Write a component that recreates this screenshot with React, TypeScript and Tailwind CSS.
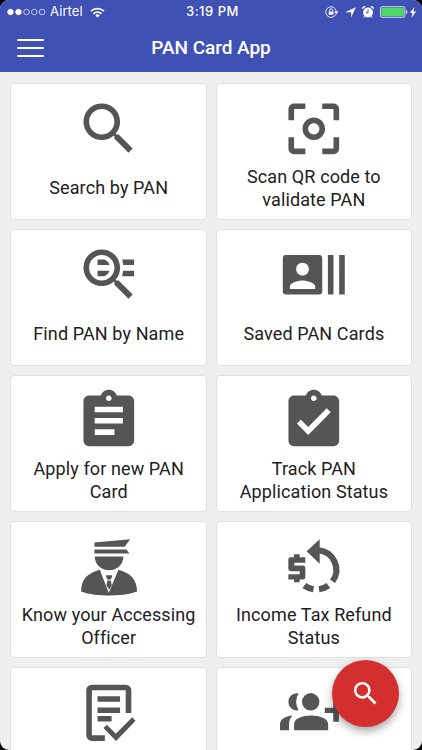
import type { ReactNode } from "react";

const SEARCH =
  "M15.5 14h-.79l-.28-.27A6.471 6.471 0 0 0 16 9.5 6.5 6.5 0 1 0 9.5 16c1.61 0 3.09-.59 4.23-1.57l.27.28v.79l5 4.99L20.49 19l-4.99-5zm-6 0C7.01 14 5 11.99 5 9.5S7.01 5 9.5 5 14 7.01 14 9.5 11.99 14 9.5 14z";
const CLIPBOARD =
  "M19 3h-4.18C14.4 1.84 13.3 1 12 1c-1.3 0-2.4.84-2.82 2H5c-1.1 0-2 .9-2 2v14c0 1.1.9 2 2 2h14c1.1 0 2-.9 2-2V5c0-1.1-.9-2-2-2zm-7 0c.55 0 1 .45 1 1s-.45 1-1 1-1-.45-1-1 .45-1 1-1z";

function Glyph({ children, viewBox = "0 0 24 24" }: { children: ReactNode; viewBox?: string }) {
  return (
    <svg viewBox={viewBox} className="block size-[67.6px] shrink-0 fill-[#555555]">
      {children}
    </svg>
  );
}

type Tile = { lines: string[]; icon: ReactNode };

const tiles: Tile[] = [
  { lines: ["Search by PAN"], icon: <Glyph><path d={SEARCH} /></Glyph> },
  {
    lines: ["Scan QR code to", "validate PAN"],
    icon: (
      <Glyph>
        <path d="M5 15H3v4c0 1.1.9 2 2 2h4v-2H5v-4zM5 5h4V3H5c-1.1 0-2 .9-2 2v4h2V5zm14-2h-4v2h4v4h2V5c0-1.1-.9-2-2-2zm0 16h-4v2h4c1.1 0 2-.9 2-2v-4h-2v4zM12 8c-2.21 0-4 1.79-4 4s1.79 4 4 4 4-1.79 4-4-1.79-4-4-4zm0 6c-1.1 0-2-.9-2-2s.9-2 2-2 2 .9 2 2-.9 2-2 2z" />
      </Glyph>
    ),
  },
  {
    lines: ["Find PAN by Name"],
    icon: (
      <Glyph>
        <path d={SEARCH} />
        <path d="M8 6.6h2.5q1.3.6 1.8 1.9H8zM8 10.6h4.3q-.5 1.3-1.8 1.9H8zM16.8 6.6H21v1.9h-3.9zM17.1 10.6H21v1.9h-4.3z" />
      </Glyph>
    ),
  },
  {
    lines: ["Saved PAN Cards"],
    icon: (
      <Glyph>
        <path d="M21 5v14h2V5h-2zm-4 14h2V5h-2v14zM14 5H2c-.55 0-1 .45-1 1v12c0 .55.45 1 1 1h12c.55 0 1-.45 1-1V6c0-.55-.45-1-1-1zM8 7.75c1.24 0 2.25 1.01 2.25 2.25S9.24 12.25 8 12.25 5.75 11.24 5.75 10 6.76 7.75 8 7.75zM12.5 17h-9v-.75c0-1.5 3-2.25 4.5-2.25s4.5.75 4.5 2.25V17z" />
      </Glyph>
    ),
  },
  {
    lines: ["Apply for new PAN", "Card"],
    icon: <Glyph><path d={CLIPBOARD + "m2 14H7v-2h7v2zm3-4H7v-2h10v2zm0-4H7V7h10v2z"} /></Glyph>,
  },
  {
    lines: ["Track PAN", "Application Status"],
    icon: <Glyph><path d={CLIPBOARD + "m-2 14l-4-4 1.41-1.41L10 14.17l6.59-6.59L18 9l-8 8z"} /></Glyph>,
  },
  {
    lines: ["Know your Accessing", "Officer"],
    icon: (
      <Glyph viewBox="223.7 43.5 202.8 202.8">
        <path d="M282 72L389 62L373 85H282zM282 93H378L387 105H282z" />
        <path d="M283 114H369C368 139 350 155 326 155S284 139 283 114z" />
        <path d="M242 219C243 183 258 166 298 154L325 223L354 154C392 165 409 183 410 219C385 228 355 231 326 231S265 228 242 219z" />
        <path d="M317 170H335V175L331 183H321L317 175zM321 186H331L334 200L326 214L318 200z" />
      </Glyph>
    ),
  },
  {
    lines: ["Income Tax Refund", "Status"],
    icon: (
      <Glyph viewBox="207 43.5 202.8 202.8">
        <path d="M287 98L326 62V136z" />
        <path
          d="M322 95.3A58.5 58.5 0 0 1 364.5 188.3M352 201A60 60 0 0 1 324 212.4M307.6 212.4A60 60 0 0 1 280 201"
          fill="none"
          stroke="#555555"
          strokeWidth="18.5"
        />
        <path d="M249 107h17v9h17v17h-33v8h26q7 0 7 7v28q0 7-7 7h-10v8h-17v-8h-17v-16h34v-9h-27q-7 0-7-7v-28q0-7 7-7h10z" />
      </Glyph>
    ),
  },
  {
    lines: [],
    icon: (
      <Glyph>
        <path d="M6 2h12a2 2 0 0 1 2 2v8.1h-2V4H6v16h4.6v2H6a2 2 0 0 1-2-2V4a2 2 0 0 1 2-2z" />
        <path d="M8 6.1h8v2H8zM8 10.1h8v2H8zM8 13.1h5v2H8zM10.1 17.4l1.2-1.2 3.2 3.2 5.8-5.8 1.2 1.2-6.9 7.2z" />
      </Glyph>
    ),
  },
  {
    lines: [],
    icon: (
      <Glyph>
        <circle cx="10.9" cy="8.1" r="3.1" />
        <path d="M5 18.2v-2.1c0-2.1 3-3.1 6-3.1s6.1 1 6.1 3.1v2.1zM0 18.2v-2.1c0-1.8 1.900-2.900 4.400-3.1-.7.8-1.200 1.800-1.200 3.100v2.100zM6.600 5.100a6 6 0 0 0 0 6C4.500 11.400 3 10 3 8.100S4.500 4.800 6.600 5.100zM15.900 10.200h3V7.100h2v3.100h3v1.900h-3v3.100h-2v-3.100h-3z" />
      </Glyph>
    ),
  },
];

function StatusBar() {
  return (
    <div className="flex h-6 items-center pl-[7px] pr-[5px] text-white">
      <svg viewBox="0 0 39 8" className="h-2 w-[39px]" fill="white" stroke="white" strokeWidth=".7">
        <circle cx="3.500" cy="4" r="2.800" />
        <circle cx="11.500" cy="4" r="2.800" />
        <g fill="none">
          <circle cx="19.500" cy="4" r="2.800" />
          <circle cx="27.300" cy="4" r="2.800" />
          <circle cx="35" cy="4" r="2.800" />
        </g>
      </svg>
      <span className="ml-[4px] w-[33px] whitespace-nowrap font-['Inter',sans-serif] text-[13px] tracking-[0.1px]">Airtel</span>
      <svg viewBox="0 0 15 11" className="ml-[7px] h-[11px] w-[15px]" fill="none" stroke="white" strokeWidth="1.700">
        <path d="M1 4.200a9.500 9.500 0 0 1 13 0M3.400 6.800a5.800 5.800 0 0 1 8.200 0" />
        <path d="M7.500 10.600L5.300 8.400a3.100 3.100 0 0 1 4.400 0z" fill="white" stroke="none" />
      </svg>
      <span className="ml-[81px] w-[54px] whitespace-nowrap font-['Inter',sans-serif] text-[13px] font-medium tracking-[0.5px]">3:19 PM</span>
      <svg viewBox="0 0 14 12" className="ml-auto h-3 w-[14px]" fill="none" stroke="white">
        <path d="M10.800 8.400A5.300 5.300 0 1 1 11.300 5.500" strokeWidth=".9" />
        <path d="M9 5.500h4.600L11.300 8.200z" fill="white" stroke="none" />
        <path d="M4.600 5.500V4.300a1.500 1.500 0 0 1 3 0v1.200" strokeWidth=".9" />
        <path d="M3.700 5.500h4.800v3.300H3.700z" fill="white" stroke="none" />
      </svg>
      <svg viewBox="0 0 11 11" className="ml-[6px] mr-[2px] size-[11px]" fill="white">
        <path d="M10.800.2L6.200 10.600V5.200H.2z" />
      </svg>
      <svg viewBox="0 0 12 12" className="ml-[4px] mr-[1px] size-3" fill="white">
        <circle cx="6" cy="6.500" r="4.900" />
        <path d="M.5 3.300A2 2 0 0 1 3.600.8zM11.500 3.300A2 2 0 0 0 8.400.8zM2.200 10l-1 1.600h1.500L3.500 11zM9.800 10l1 1.600H9.300L8.500 11z" />
        <path d="M6 3.600v3.200H3.800" fill="none" stroke="#3f51b5" />
      </svg>
      <svg viewBox="0 0 28 12" className="ml-[5px] h-3 w-7">
        <rect x=".5" y=".7" width="24.400" height="10.600" rx="1.600" fill="none" stroke="white" strokeWidth=".8" />
        <rect x="1.500" y="1.700" width="22.400" height="8.600" rx=".6" fill="#4cd964" />
        <path d="M26 4a2.200 2.200 0 0 1 0 4z" fill="white" />
      </svg>
      <svg viewBox="0 0 6 11" className="ml-[2px] mr-[1px] h-[11px] w-[6px]" fill="white">
        <path d="M4.300 0L0 6h2.500L1.500 11 6 4.500H3.400z" />
      </svg>
    </div>
  );
}

export default function App() {
  return (
    <div className="h-[750px] w-[422px] bg-black">
      <div className="relative flex h-full flex-col overflow-hidden rounded-[9px] bg-[#efefef] font-['Roboto',sans-serif]">
        <header className="h-[72px] shrink-0 bg-[#3f51b5] text-white">
          <StatusBar />
          <div className="grid h-12 grid-cols-[44px_1fr_44px] items-center">
            <button aria-label="Menu" className="ml-[17px] flex w-[27px] flex-col gap-[6px]">
              <span className="h-[2px] rounded-full bg-white" />
              <span className="h-[2px] rounded-full bg-white" />
              <span className="h-[2px] rounded-full bg-white" />
            </button>
            <h1 className="text-center text-[19px] font-medium tracking-[-0.05px]">PAN Card App</h1>
          </div>
        </header>
        <main className="grid grid-cols-[196.6px_196px] gap-x-[8.9px] gap-y-[9px] pl-[10.4px] pt-[10.5px]">
          {tiles.map((tile, i) => (
            <section
              key={i}
              className="flex h-[137px] flex-col items-center rounded-[4px] border border-[#e0e0e0] bg-white pt-[11px]"
            >
              {tile.icon}
              <div className="flex h-[52px] flex-col justify-center whitespace-nowrap text-center text-[18px] leading-[23.500px] tracking-[0.11px] text-[#212121]">
                {tile.lines.map((line) => (
                  <p key={line}>{line}</p>
                ))}
              </div>
            </section>
          ))}
        </main>
        <button
          aria-label="Search"
          className="absolute left-[332px] top-[660px] flex size-[67px] items-center justify-center rounded-full bg-[#d32f2f] shadow-[0_4px_8px_rgba(0,0,0,0.35)]"
        >
          <svg viewBox="0 0 24 24" className="size-[31px] fill-white">
            <path d={SEARCH} />
          </svg>
        </button>
      </div>
    </div>
  );
}
